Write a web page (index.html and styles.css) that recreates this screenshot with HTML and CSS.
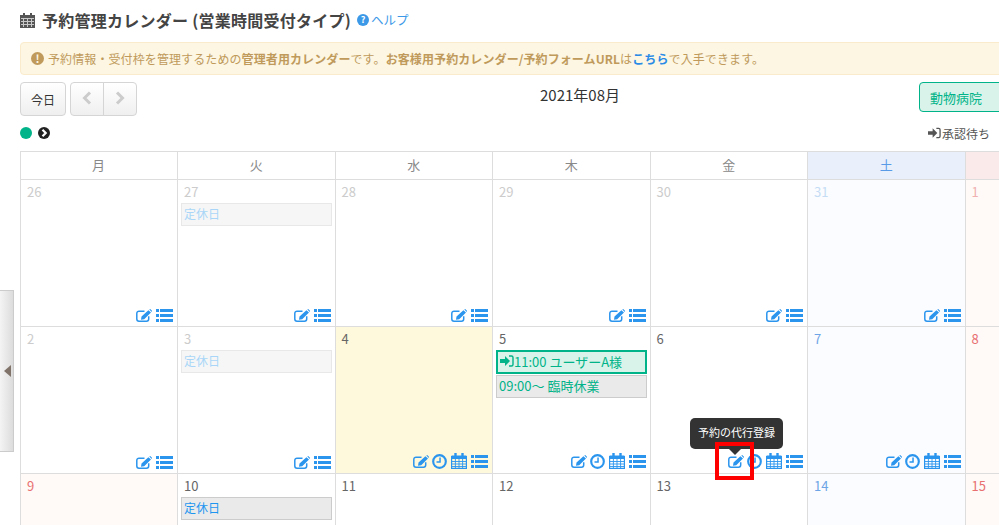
FILE: index.html
```html
<!DOCTYPE html>
<html lang="ja">

<head>
    <meta charset="UTF-8">
    <title>予約管理カレンダー</title>
    <link rel="stylesheet" href="styles.css">
</head>

<body>

    <!-- Icon set -->
    <svg class="icon-defs" xmlns="http://www.w3.org/2000/svg">
        <symbol id="i-edit" viewBox="0 0 16 13">
            <path d="M8.5 2.2H3A2.2 2.2 0 0 0 .8 4.4v5.6A2.2 2.2 0 0 0 3 12.2h7.5a2.2 2.2 0 0 0 2.2-2.2V7.2" fill="none" stroke="currentColor" stroke-width="1.5"/>
            <path d="M12.4 1.2l2.6 2.4-6.8 6.6-3.2.6.5-3.2zM13.3.4l.9-.4 1.8 1.8-.3 1.1z" fill="currentColor"/>
        </symbol>
        <symbol id="i-clock" viewBox="0 0 14 14">
            <circle cx="7" cy="7" r="5.9" fill="none" stroke="currentColor" stroke-width="2"/>
            <path d="M7.5 3.2v4.3H4.2" fill="none" stroke="currentColor" stroke-width="1.4"/>
        </symbol>
        <symbol id="i-calendar" viewBox="0 0 16 16">
            <path d="M.6 3.5h14.8v11.9H.6z" fill="none" stroke="currentColor" stroke-width="1.2"/>
            <path d="M.6 2.5h14.8V6H.6z" fill="currentColor"/>
            <path d="M4.5 0v3.5M11.5 0v3.5" stroke="currentColor" stroke-width="2.4" stroke-linecap="round"/>
            <path d="M.6 8.5h14.8M.6 11h14.8M.6 13.5h14.8M4.4 6v9M8 6v9M11.6 6v9" stroke="currentColor" stroke-width=".9"/>
        </symbol>
        <symbol id="i-list" viewBox="0 0 17 13">
            <path d="M0 0h3v3H0zM4 0h13v3H4zM0 5h3v3H0zM4 5h13v3H4zM0 10h3v3H0zM4 10h13v3H4z" fill="currentColor"/>
        </symbol>
        <symbol id="i-signin" viewBox="0 0 14 12">
            <path d="M0 4h5V1l5 5-5 5V8H0z" fill="currentColor"/>
            <path d="M9 1h2.5A1.5 1.5 0 0 1 13 2.5v7a1.5 1.5 0 0 1-1.5 1.5H9" fill="none" stroke="currentColor" stroke-width="1.4"/>
        </symbol>
    </svg>

    <div class="page">
        <h1 class="page-title">
            <svg class="title-icon" viewBox="0 0 15 15"><path d="M0 2h15v13H0z" fill="#555"/><path d="M3 0h2v3H3zM10 0h2v3h-2z" fill="#555"/><path d="M1 5.5h13M1 8.5h13M1 11.5h13M3.5 5v9M7.5 5v9M11.5 5v9" stroke="#c8c8c8" stroke-width="1"/></svg>
            <span>予約管理カレンダー (営業時間受付タイプ)</span>
            <a class="help" href="#"><span class="help-mark">?</span>ヘルプ</a>
        </h1>

        <div class="notice">
            <span class="notice-mark">!</span>
            <span>予約情報・受付枠を管理するための<b>管理者用カレンダー</b>です。<b>お客様用予約カレンダー/予約フォームURL</b>は<a href="#">こちら</a>で入手できます。</span>
        </div>

        <div class="toolbar">
            <div class="toolbar-left">
                <button class="btn">今日</button>
                <div class="btn-group">
                    <button class="btn btn-arrow"><svg viewBox="0 0 10 14"><path d="M8 1.5L2.5 7 8 12.5" fill="none" stroke="currentColor" stroke-width="3"/></svg></button>
                    <button class="btn btn-arrow"><svg viewBox="0 0 10 14"><path d="M2 1.5L7.5 7 2 12.5" fill="none" stroke="currentColor" stroke-width="3"/></svg></button>
                </div>
            </div>
            <div class="month">2021年08月</div>
            <button class="shop-btn">動物病院</button>
        </div>

        <div class="legend">
            <span class="dot"></span>
            <span class="dot-next"><svg viewBox="0 0 12 12"><path d="M4.5 2.8L7.7 6 4.5 9.2" fill="none" stroke="#fff" stroke-width="2.2"/></svg></span>
            <a class="pending" href="#"><svg class="pending-icon"><use href="#i-signin"/></svg>承認待ち</a>
        </div>

        <div class="calendar">
            <div class="head">月</div>
            <div class="head">火</div>
            <div class="head">水</div>
            <div class="head">木</div>
            <div class="head">金</div>
            <div class="head head-sat">土</div>
            <div class="head head-sun">日</div>

            <!-- week 1 -->
            <div class="day past"><span class="num">26</span>
                <div class="acts"><svg class="a-edit"><use href="#i-edit"/></svg><svg class="a-list"><use href="#i-list"/></svg></div>
            </div>
            <div class="day past"><span class="num">27</span>
                <div class="event closed faded">定休日</div>
                <div class="acts"><svg class="a-edit"><use href="#i-edit"/></svg><svg class="a-list"><use href="#i-list"/></svg></div>
            </div>
            <div class="day past"><span class="num">28</span>
                <div class="acts"><svg class="a-edit"><use href="#i-edit"/></svg><svg class="a-list"><use href="#i-list"/></svg></div>
            </div>
            <div class="day past"><span class="num">29</span>
                <div class="acts"><svg class="a-edit"><use href="#i-edit"/></svg><svg class="a-list"><use href="#i-list"/></svg></div>
            </div>
            <div class="day past"><span class="num">30</span>
                <div class="acts"><svg class="a-edit"><use href="#i-edit"/></svg><svg class="a-list"><use href="#i-list"/></svg></div>
            </div>
            <div class="day past sat"><span class="num">31</span>
                <div class="acts"><svg class="a-edit"><use href="#i-edit"/></svg><svg class="a-list"><use href="#i-list"/></svg></div>
            </div>
            <div class="day past sun"><span class="num">1</span></div>

            <!-- week 2 -->
            <div class="day past"><span class="num">2</span>
                <div class="acts"><svg class="a-edit"><use href="#i-edit"/></svg><svg class="a-list"><use href="#i-list"/></svg></div>
            </div>
            <div class="day past"><span class="num">3</span>
                <div class="event closed faded">定休日</div>
                <div class="acts"><svg class="a-edit"><use href="#i-edit"/></svg><svg class="a-list"><use href="#i-list"/></svg></div>
            </div>
            <div class="day today"><span class="num">4</span>
                <div class="acts"><svg class="a-edit"><use href="#i-edit"/></svg><svg class="a-clock"><use href="#i-clock"/></svg><svg class="a-cal"><use href="#i-calendar"/></svg><svg class="a-list"><use href="#i-list"/></svg></div>
            </div>
            <div class="day"><span class="num">5</span>
                <div class="event booked"><svg class="booked-icon"><use href="#i-signin"/></svg>11:00 ユーザーA様</div>
                <div class="event holiday">09:00～ 臨時休業</div>
                <div class="acts"><svg class="a-edit"><use href="#i-edit"/></svg><svg class="a-clock"><use href="#i-clock"/></svg><svg class="a-cal"><use href="#i-calendar"/></svg><svg class="a-list"><use href="#i-list"/></svg></div>
            </div>
            <div class="day"><span class="num">6</span>
                <div class="acts">
                    <span class="tip-anchor">
                        <svg class="a-edit"><use href="#i-edit"/></svg>
                        <span class="tooltip">予約の代行登録</span>
                        <span class="highlight"></span>
                    </span>
                    <svg class="a-clock"><use href="#i-clock"/></svg><svg class="a-cal"><use href="#i-calendar"/></svg><svg class="a-list"><use href="#i-list"/></svg>
                </div>
            </div>
            <div class="day sat"><span class="num">7</span>
                <div class="acts"><svg class="a-edit"><use href="#i-edit"/></svg><svg class="a-clock"><use href="#i-clock"/></svg><svg class="a-cal"><use href="#i-calendar"/></svg><svg class="a-list"><use href="#i-list"/></svg></div>
            </div>
            <div class="day sun"><span class="num">8</span></div>

            <!-- week 3 -->
            <div class="day sun"><span class="num">9</span></div>
            <div class="day"><span class="num">10</span>
                <div class="event closed">定休日</div>
            </div>
            <div class="day"><span class="num">11</span></div>
            <div class="day"><span class="num">12</span></div>
            <div class="day"><span class="num">13</span></div>
            <div class="day sat"><span class="num">14</span></div>
            <div class="day sun"><span class="num">15</span></div>
        </div>
    </div>

    <!-- Side menu handle -->
    <div class="side-handle"><span class="side-arrow"></span></div>

</body>

</html>
```

FILE: styles.css
```css
/* Global Styles */
html,
body {
    height: 525px;
    overflow: hidden;
}

body {
    margin: 0;
    font-family: "Noto Sans CJK JP", "Noto Sans", sans-serif;
    font-size: 13px;
    color: #333;
    background-color: #fff;
}

a {
    text-decoration: none;
}

.icon-defs {
    display: none;
}

.page {
    width: 1123px;
    padding: 6px 0 0 20px;
}

/* Title */
.page-title {
    display: flex;
    align-items: center;
    height: 28px;
    margin: 0;
    font-size: 16px;
    font-weight: 700;
    letter-spacing: .25px;
    line-height: 28px;
    color: #444;
}

.title-icon {
    width: 15px;
    height: 15px;
    margin-right: 7px;
}

.help {
    display: flex;
    align-items: center;
    margin-left: 6px;
    font-size: 12.5px;
    font-weight: 400;
    letter-spacing: 0;
    color: #3c99e8;
}

.help-mark {
    width: 12px;
    height: 12px;
    margin-right: 2px;
    border-radius: 50%;
    background-color: #3c99e8;
    color: #fff;
    font-size: 9px;
    font-weight: 700;
    line-height: 12px;
    text-align: center;
}

/* Notice */
.notice {
    display: flex;
    align-items: center;
    height: 31px;
    margin-top: 8px;
    padding-left: 10px;
    border: 1px solid #faebcc;
    border-radius: 4px;
    background-color: #fcf6e3;
    color: #c09a5b;
    font-size: 12px;
    letter-spacing: .1px;
    white-space: nowrap;
}

.notice a {
    color: #2a8be6;
    font-weight: 700;
}

.notice-mark {
    width: 13px;
    height: 13px;
    margin-right: 4px;
    border-radius: 50%;
    background-color: #c09a5b;
    color: #fcf6e3;
    font-size: 11px;
    font-weight: 700;
    line-height: 13px;
    text-align: center;
}

/* Toolbar */
.toolbar {
    display: flex;
    align-items: flex-start;
    margin-top: 7px;
}

.toolbar-left {
    display: flex;
    gap: 4px;
    width: 500px;
}

.btn {
    height: 34px;
    padding: 0 10px;
    border: 1px solid #d5d5d5;
    border-radius: 4px;
    background: linear-gradient(#fff, #efefef);
    color: #333;
    font-family: inherit;
    font-size: 12px;
}

.btn-group {
    display: flex;
}

.btn-arrow {
    width: 34px;
    padding: 0;
    color: #ccc;
}

.btn-arrow svg {
    width: 10px;
    height: 14px;
}

.btn-arrow:first-child {
    border-radius: 4px 0 0 4px;
}

.btn-arrow:last-child {
    margin-left: -1px;
    border-radius: 0 4px 4px 0;
}

.month {
    width: 120px;
    padding-top: 3px;
    font-size: 15px;
    line-height: 20px;
    text-align: center;
}

.shop-btn {
    width: 120px;
    height: 30px;
    margin-left: 279px;
    padding: 0 10px;
    border: 1px solid #00b388;
    border-radius: 4px;
    background-color: #d9f3ea;
    color: #00b388;
    font-family: inherit;
    font-size: 13px;
    text-align: left;
}

/* Legend row */
.legend {
    display: flex;
    align-items: center;
    gap: 6px;
    width: 970px;
    height: 20px;
    margin-top: 7px;
}

.dot {
    width: 12px;
    height: 12px;
    border-radius: 50%;
    background-color: #00b388;
}

.dot-next {
    width: 12px;
    height: 12px;
}

.dot-next svg {
    display: block;
    width: 12px;
    height: 12px;
    border-radius: 50%;
    background-color: #222;
}

.pending {
    display: flex;
    align-items: center;
    gap: 1px;
    margin-left: auto;
    color: #555;
    font-size: 12px;
}

.pending-icon {
    width: 13px;
    height: 12px;
    color: #555;
}

/* Calendar */
.calendar {
    display: grid;
    grid-template-columns: 158px repeat(6, 157.5px);
    grid-template-rows: 28px repeat(3, 147px);
    margin-top: 8px;
    border-top: 1px solid #ddd;
}

.head {
    border-right: 1px solid #ddd;
    border-bottom: 1px solid #ddd;
    color: #888;
    font-size: 13px;
    line-height: 26px;
    text-align: center;
}

.head:first-child,
.day:nth-child(7n+1) {
    box-shadow: inset 1px 0 0 #ddd;
}

.head-sat {
    background-color: #e9f0fb;
    color: #5a9be8;
}

.head-sun {
    background-color: #fbeaea;
    color: #e87070;
}

.day {
    position: relative;
    display: flex;
    flex-direction: column;
    padding: 3px 3px 0;
    border-right: 1px solid #ddd;
    border-bottom: 1px solid #ddd;
}

.day:nth-child(7n+1) {
    padding-left: 4px;
}

.num {
    padding-left: 3px;
    height: 20px;
    color: #666;
    font-size: 13px;
    line-height: 18px;
}

.past .num {
    color: #ccc;
}

.sat {
    background-color: #fbfcff;
}

.sat .num {
    color: #6ea5e6;
}

.sat.past .num {
    color: #c5dcf5;
}

.sun {
    background-color: #fff9f8;
}

.sun .num {
    color: #e87070;
}

.sun.past .num {
    color: #f0b0b0;
}

.today {
    background-color: #fef9dc;
}

/* Events */
.event {
    box-sizing: border-box;
    height: 23px;
    margin-bottom: 1px;
    padding-left: 2px;
    border: 1px solid #ccc;
    background-color: #eaeaea;
    font-size: 13px;
    line-height: 19px;
    white-space: nowrap;
}

.closed {
    color: #1e96f0;
    font-size: 12px;
}

.faded {
    border-color: #e8e8e8;
    background-color: #f6f6f6;
    color: #a9d6f8;
}

.booked {
    display: flex;
    align-items: center;
    height: 24px;
    padding-bottom: 2px;
    border: 2px solid #00b388;
    background-color: #d9f3ea;
    color: #00b388;
}

.booked-icon {
    width: 14px;
    height: 12px;
}

.holiday {
    color: #00b388;
}

/* Action icons */
.acts {
    position: absolute;
    right: 4px;
    bottom: 4px;
    display: flex;
    align-items: center;
    gap: 4px;
    color: #2b95ee;
}

.acts svg {
    display: block;
}

.a-edit {
    width: 16px;
    height: 13px;
}

.acts .a-clock {
    width: 15px;
    height: 15px;
    margin-left: -1px;
}

.a-cal {
    width: 16px;
    height: 16px;
}

.a-list {
    width: 17px;
    height: 13px;
}

.tip-anchor {
    position: relative;
    display: block;
}

.tooltip {
    position: absolute;
    left: -38px;
    bottom: 19px;
    z-index: 2;
    width: 93px;
    height: 31px;
    border-radius: 5px;
    background-color: #333;
    color: #fff;
    font-size: 11px;
    line-height: 29px;
    text-align: center;
    white-space: nowrap;
}

.tooltip:after {
    content: "";
    position: absolute;
    top: 31px;
    left: 39px;
    border-style: solid;
    border-width: 6px 6px 0 6px;
    border-color: #333 transparent transparent transparent;
}

.highlight {
    position: absolute;
    left: -13px;
    top: -13px;
    z-index: 3;
    box-sizing: border-box;
    width: 39px;
    height: 38px;
    border: 4px solid #f00;
}

/* Side menu handle */
.side-handle {
    position: absolute;
    left: 0;
    top: 290px;
    display: flex;
    align-items: center;
    box-sizing: border-box;
    width: 14px;
    height: 162px;
    border: 1px solid #ccc;
    border-left: none;
    background: linear-gradient(to right, #f4f4f4, #dcdcdc);
}

.side-arrow {
    margin-left: 4px;
    border-style: solid;
    border-width: 6px 7px 6px 0;
    border-color: transparent #80746a transparent transparent;
}
```
